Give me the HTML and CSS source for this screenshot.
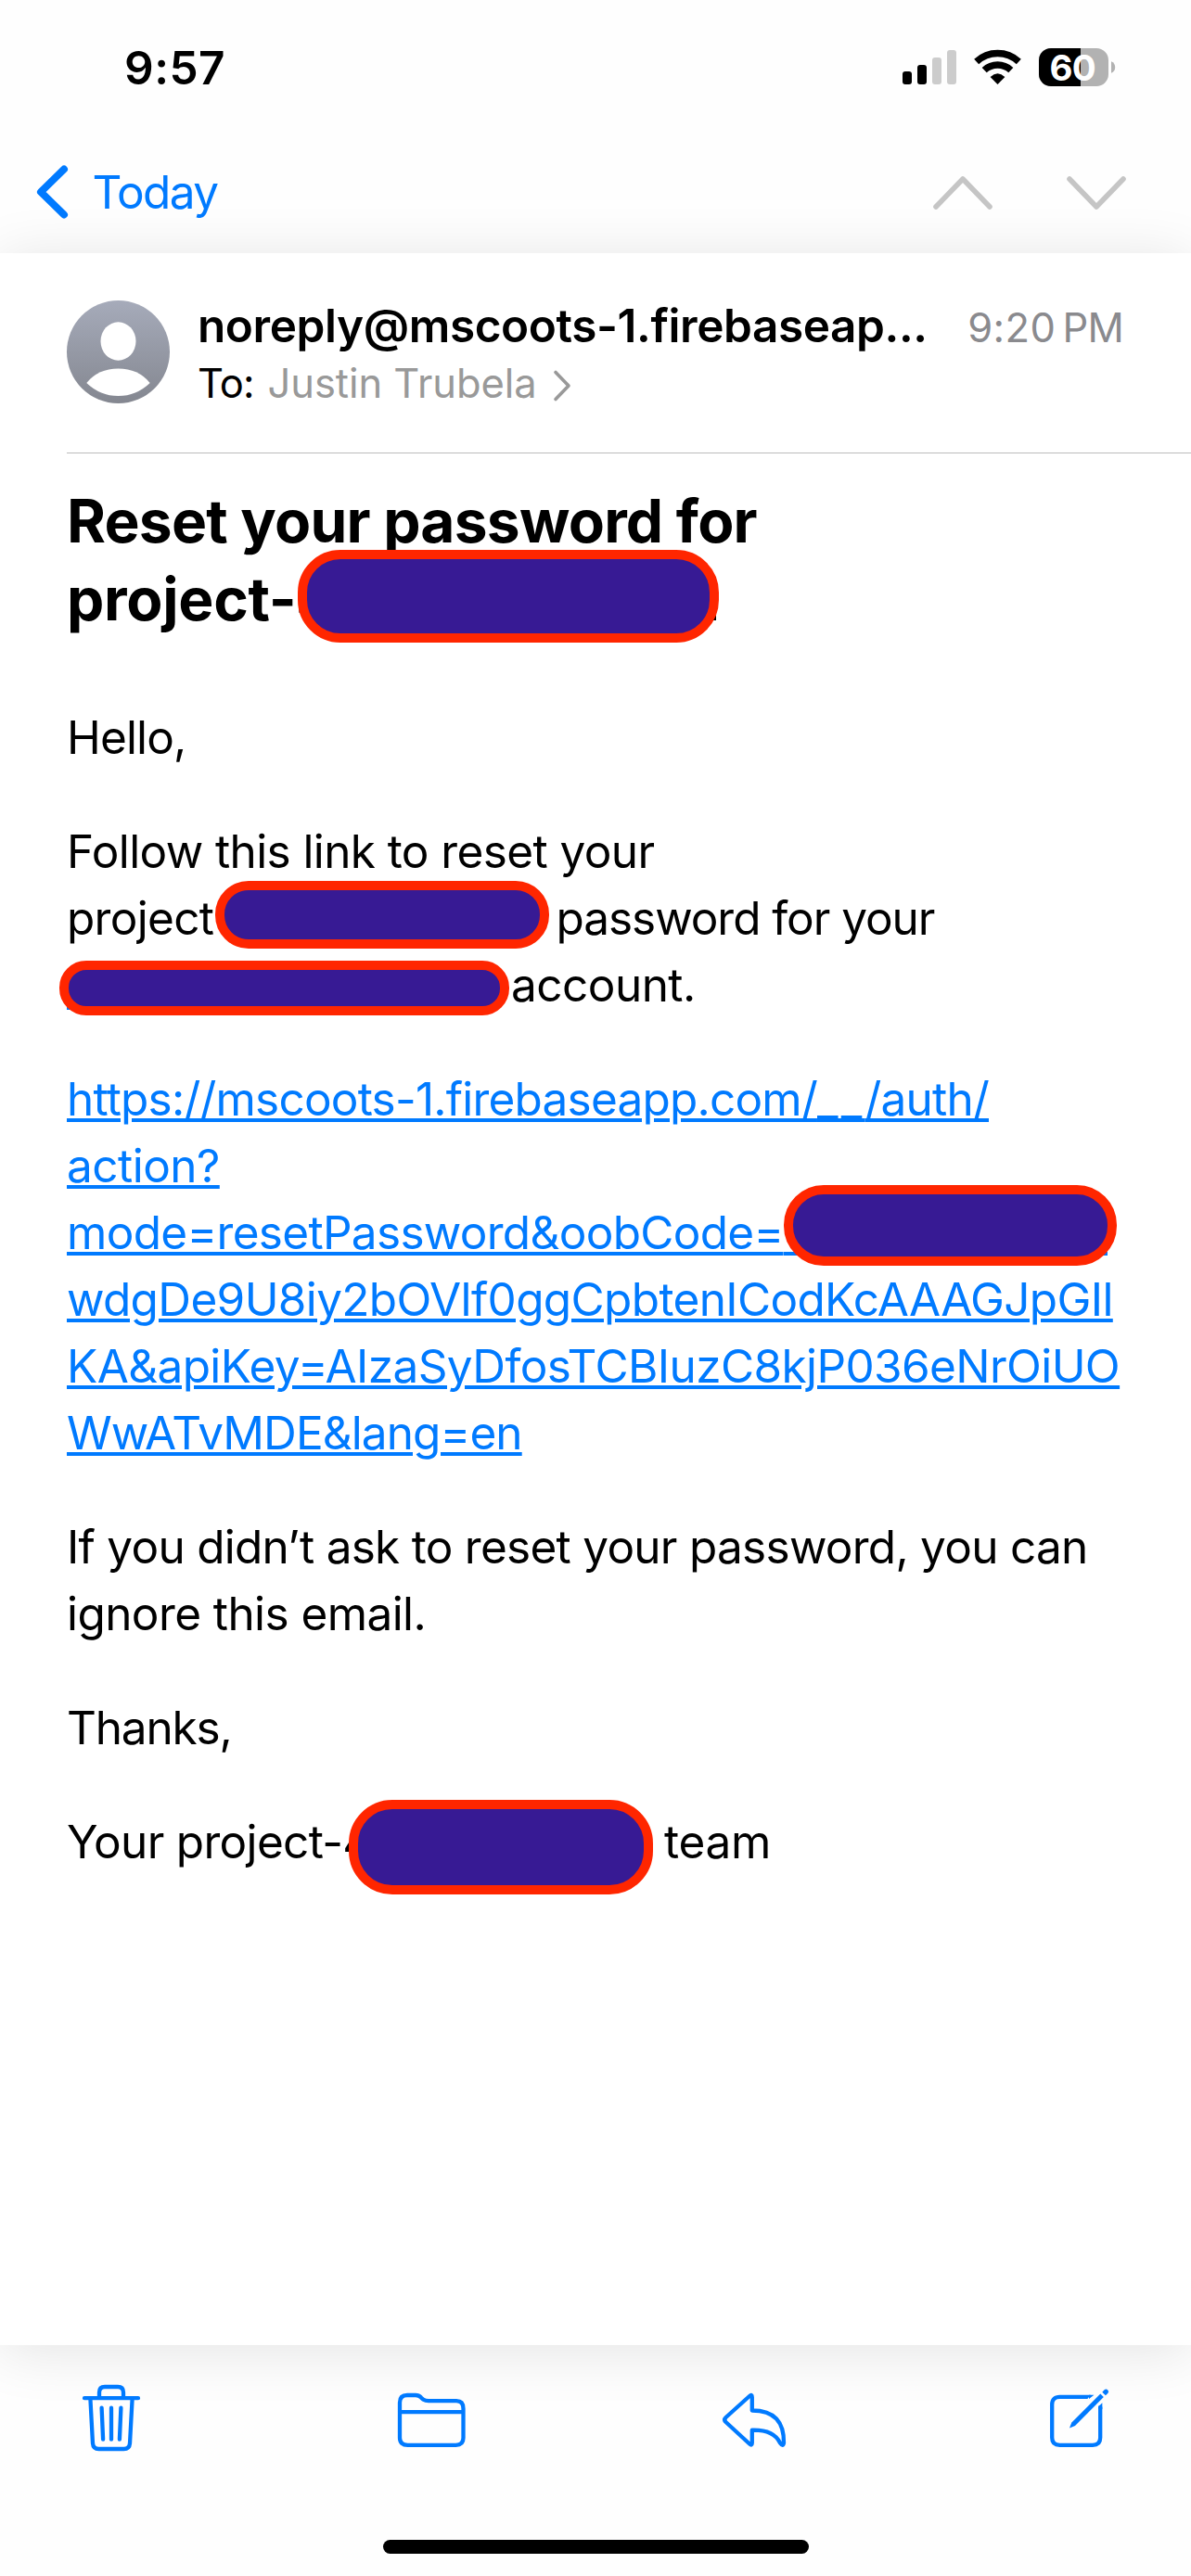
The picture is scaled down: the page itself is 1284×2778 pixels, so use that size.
FILE: index.html
```
<!DOCTYPE html>
<html lang="en">
<head>
<meta charset="utf-8">
<title>Mail</title>
<link rel="stylesheet" href="styles.css">
</head>
<body>
<div class="screen">
  <header class="top">
    <div class="status">
      <span class="clock">9:57</span>
      <svg class="status-icons" width="230" height="42" viewBox="0 0 230 42">
        <rect x="0" y="25" width="10" height="14" rx="3"/>
        <rect x="16" y="18" width="10" height="21" rx="3"/>
        <rect x="32" y="10" width="10" height="29" rx="3" fill="#ccc"/>
        <rect x="48" y="2" width="10" height="37" rx="3" fill="#ccc"/>
        <g transform="translate(77 2)">
          <path d="M2.7 12.5A33.5 33.5 0 0 1 48.3 12.5M11.2 21.6A21 21 0 0 1 39.8 21.6" fill="none" stroke="#000" stroke-width="7.4"/>
          <path d="M25.5 37L17.6 29Q25.5 21.6 33.4 29Z"/>
        </g>
        <clipPath id="cell"><rect x="147" y="0" width="75" height="41" rx="13"/></clipPath>
        <g clip-path="url(#cell)">
          <rect x="147" y="0" width="75" height="41" fill="#b2b2b2"/>
          <rect x="147" y="0" width="45" height="41"/>
        </g>
        <path d="M225 14.3Q229.2 16 229.2 20.5T225 26.7Z" fill="#b2b2b2"/>
        <text class="charge" x="158.6" y="34.5">60</text>
      </svg>
    </div>
    <nav class="nav">
      <a class="back">
        <svg width="36" height="60" viewBox="0 0 36 60"><path d="M30 5.5L5 30L30 54.5" fill="none" stroke="#007aff" stroke-width="8" stroke-linecap="round" stroke-linejoin="round"/></svg>
        <span>Today</span>
      </a>
      <div class="pager">
        <svg width="64" height="36" viewBox="0 0 64 36"><path d="M3 33L32 3L61 33"/></svg>
        <svg width="64" height="36" viewBox="0 0 64 36"><path d="M3 3L32 33L61 3"/></svg>
      </div>
    </nav>
  </header>

  <main class="sheet">
    <section class="sender">
      <svg class="avatar" width="111" height="111" viewBox="0 0 111 111">
        <linearGradient id="av" x1="0" y1="0" x2="0" y2="1"><stop offset="0" stop-color="#a6abba"/><stop offset="1" stop-color="#848790"/></linearGradient>
        <circle cx="55.5" cy="55.5" r="55.5" fill="url(#av)"/>
        <ellipse cx="55.5" cy="44" rx="19" ry="20.7" fill="#fff"/>
        <path d="M21.3 89Q34 73.6 55.5 73.6T89.7 89Q75 103 55.5 103T21.3 89Z" fill="#fff"/>
      </svg>
      <div class="who">
        <div class="from-row">
          <span class="from">noreply@mscoots-1.firebaseap...</span>
          <span class="time"><span class="clocktime">9:20</span><span class="meridiem">PM</span></span>
        </div>
        <div class="to-row">
          <span class="to">To:</span>
          <span class="recipient">Justin Trubela</span>
          <svg width="20" height="36" viewBox="0 0 20 36"><path d="M3 3.5L17 18L3 32.5" fill="none" stroke="#999" stroke-width="3.6" stroke-linecap="round" stroke-linejoin="round"/></svg>
        </div>
      </div>
    </section>

    <article class="message">
      <h1 class="subject">
        <span class="line">Reset your password for</span>
        <span class="line"><span class="lead-subject">project-4</span><span class="mask mask-subject"></span><span class="peek peek-subject"></span></span>
      </h1>
      <p><span class="line s-86">Hello,</span></p>
      <p>
        <span class="line s-63">Follow this link to reset your</span>
        <span class="line"><span class="s-82">project</span><span class="mask mask-project"></span><span class="s-110">password for your</span></span>
        <span class="line"><span class="peek peek-account"></span><span class="mask mask-account"></span><span class="s-53">account.</span></span>
      </p>
      <p class="link">
        <span class="line"><a class="s-79">https://mscoots-1.firebaseapp.com/<span class="blanks">__</span>/auth/</a></span>
        <a class="line s-53">action?</a>
        <span class="line"><a class="lead-code s-69">mode=resetPassword&amp;oobCode=</a><span class="peek peek-code"></span><span class="mask mask-code"></span></span>
        <a class="line s-67">wdgDe9U8iy2bOVlf0ggCpbtenICodKcAAAGJpGIl</a>
        <a class="line s-61">KA&amp;apiKey=AIzaSyDfosTCBIuzC8kjP036eNrOiUO</a>
        <a class="line s-90">WwATvMDE&amp;lang=en</a>
      </p>
      <p>
        <span class="line s-71">If you didn’t ask to reset your password, you can</span>
        <span class="line s-58">ignore this email.</span>
      </p>
      <p><span class="line s-118">Thanks,</span></p>
      <p><span class="line"><span class="lead-sign s-69">Your project-4</span><span class="mask mask-sign"></span><span class="s-27">team</span></span></p>
    </article>
  </main>

  <footer class="bottom">
    <div class="toolbar">
      <svg width="66" height="80" viewBox="0 0 66 80">
        <path d="M4 17.2H62M20 17V11Q20 5 26 5H40Q46 5 46 11V17M10.4 18L13 66Q13.5 72 19.5 72H46.5Q52.5 72 53 66L55.600 18"/>
        <path d="M22.600 27.700L24.100 61.700M33 27.700V61.700M43.400 27.700L41.900 61.700" stroke-width="3.700"/>
      </svg>
      <svg class="folder" width="76" height="64" viewBox="0 0 76 64">
        <path d="M3 51V13Q3 5 11 5H20Q23.500 5 26 7.600L28.500 9.800Q30.500 11.200 34 11.200H64Q71.500 11.200 71.500 19.500V51Q71.500 58.800 63.500 58.800H11.500Q3 58.800 3 51ZM3 23.200H71.500"/>
      </svg>
      <svg class="reply" width="72" height="64" viewBox="0 0 72 64">
        <path d="M33.800 7.200Q33.800 3.500 31 6L5.500 29Q3 31.500 5.500 34L31 57.500Q33.800 60 33.800 56.500V42.700Q57 42 64 56.500Q67 61 68 56.500C68.300 34 58 21.500 33.800 21.500Z"/>
      </svg>
      <svg class="compose" width="70" height="66" viewBox="0 0 70 66">
        <path d="M45.500 6.900H12.500Q4.200 6.900 4.200 15V50.700Q4.200 58.800 12.500 58.800H48Q56.200 58.800 56.200 50.700V18"/>
        <path d="M57 12L48 2L40 12L47 20Z" fill="#fdfdfd" stroke="none"/>
        <path d="M44 9.100L49.500 4.700H44ZM54.050 17.500L58.350 13.200V20H54.050Z" fill="#007aff" stroke="none"/>
        <path d="M23 40.500L25.300 34.500L56.300 3.600L59.800 7.100L29 38Z" fill="#007aff" stroke="none"/>
        <path d="M58.300 1.700L60.600 -0.800Q62.500 -2.300 64.300 -0.600T64.300 3L61.900 5.300Z" fill="#007aff" stroke="none"/>
      </svg>
    </div>
    <div class="home"></div>
  </footer>
</div>
</body>
</html>
```
FILE: styles.css
```
* { box-sizing: border-box; }
body { margin: 0; background: #fefefe; }
svg { display: block; flex: none; overflow: visible; }

.screen {
  width: 1284px;
  height: 2778px;
  display: flex;
  flex-direction: column;
  overflow: hidden;
  font-family: Inter, "Liberation Sans", sans-serif;
  font-size: 49.5px;
  line-height: 60px;
  color: #000;
  background: #fefefe;
}

/* status bar and navigation */
.top { height: 273px; flex: none; }
.status {
  display: flex;
  justify-content: space-between;
  padding: 43px 81px 0 134px;
  height: 140px;
}
.clock { font-weight: 600; letter-spacing: 0.47px; }
.status-icons { margin-top: 9px; }
.charge { font-size: 38.5px; font-weight: 700; letter-spacing: -0.9px; fill: #fff; }
.nav {
  display: flex;
  justify-content: space-between;
  padding: 36px 70px 0 39px;
}
.back { display: flex; gap: 24.5px; color: #007aff; letter-spacing: -1.6px; }
.back span { margin-top: 1px; }
.back svg { margin-top: 1px; }
.pager { display: flex; gap: 80px; margin-top: 14px; }
.pager path {
  fill: none;
  stroke: #c5c5c5;
  stroke-width: 5.6px;
  stroke-linecap: round;
  stroke-linejoin: round;
}

/* message sheet */
.sheet {
  height: 2256px;
  flex: none;
  background: #fff;
  box-shadow: 0 6px 58px rgba(0, 0, 0, 0.11);
}
.sender {
  display: flex;
  height: 216px;
  margin-left: 72px;
  padding: 48px 73px 0 0;
  border-bottom: 1px solid #bbb;
}
.avatar { margin-top: 3px; }
.who { flex: 1; padding-left: 30px; }
.from-row { display: flex; justify-content: space-between; white-space: nowrap; }
.from { font-weight: 600; letter-spacing: -0.42px; }
.time { display: flex; gap: 7px; padding-top: 2px; font-size: 43.5px; color: #8a8a8e; }
.clocktime { letter-spacing: 0.45px; }
.meridiem { letter-spacing: -0.78px; }
.to-row { display: flex; font-size: 43.5px; }
.to { width: 75.5px; letter-spacing: -0.88px; }
.recipient { width: 307px; color: #999; letter-spacing: -0.05px; }
.to-row svg { margin-top: 15px; }

.message { padding: 31px 72px 0; line-height: 72px; }
.message p { margin: 0 0 51px; }
.line { display: flex; align-items: flex-start; height: 72px; white-space: nowrap; }
.subject {
  margin: 0 0 71px;
  font-size: 64px;
  line-height: 84px;
  font-weight: 700;
  letter-spacing: -0.77px;
}
.subject .line { height: 84px; }
.link { color: #007aff; }
.link a {
  text-decoration: underline;
  text-decoration-thickness: 4px;
  text-underline-offset: 3px;
}
.blanks { letter-spacing: 3.2px; }

/* tracking for each run of text */
.s-27 { letter-spacing: -0.27px; }
.s-53 { letter-spacing: -0.53px; }
.s-58 { letter-spacing: -0.58px; }
.s-61 { letter-spacing: -0.61px; }
.s-63 { letter-spacing: -0.6px; }
.s-67 { letter-spacing: -0.65px; }
.s-69 { letter-spacing: -0.69px; }
.s-71 { letter-spacing: -0.73px; }
.s-79 { letter-spacing: -0.79px; }
.s-82 { letter-spacing: -0.7px; }
.s-86 { letter-spacing: -0.86px; }
.s-90 { letter-spacing: -0.9px; }
.s-110 { letter-spacing: -1.05px; }
.s-118 { letter-spacing: -1.18px; }

/* redaction capsules, painted over the neighbouring text */
.mask {
  position: relative;
  z-index: 1;
  flex: none;
  background: #371a94;
  border: 10px solid #ff2600;
}
.mask-subject { width: 454px; height: 100px; margin-top: -11px; border-radius: 46px; }
.mask-project { width: 360px; height: 73px; margin: -4px 7.5px 0 1.8px; border-radius: 36px; }
.mask-account { width: 485.5px; height: 59px; margin: 10px 2px 0 -18.5px; border-radius: 29px; }
.mask-code { width: 359px; height: 87px; margin: -15px 0 0 -349px; border-radius: 43px; }
.mask-sign { width: 328px; height: 102px; margin: -9px 12px 0 0; border-radius: 47px; }
.lead-subject { width: 249px; letter-spacing: -0.27px; }
.lead-code { width: 773px; }
.lead-sign { width: 304px; }
.peek { flex: none; background: #007aff; }
.peek-subject { width: 9px; height: 47px; margin: 18px 0 0 -12px; background: #000; }
.peek-account { width: 10px; height: 3px; margin-top: 60px; }
.peek-code { width: 349px; height: 4px; margin-top: 57px; }

/* bottom toolbar */
.bottom { flex: 1; display: flex; flex-direction: column; align-items: center; }
.toolbar {
  align-self: stretch;
  height: 210px;
  display: flex;
  align-items: flex-start;
  padding: 40px 0 0 87px;
}
.toolbar path {
  fill: none;
  stroke: #007aff;
  stroke-width: 4.3px;
  stroke-linecap: round;
  stroke-linejoin: round;
}
.toolbar path[fill] { fill: #007aff; stroke: none; }
.toolbar path[fill="#fdfdfd"] { fill: #fdfdfd; }
.toolbar .folder { margin: 9px 0 0 275px; }
.toolbar .reply { margin: 9px 0 0 273px; }
.toolbar .compose { margin: 9px 0 0 281px; }
.home { width: 459px; height: 15px; border-radius: 8px; background: #000; }
```
